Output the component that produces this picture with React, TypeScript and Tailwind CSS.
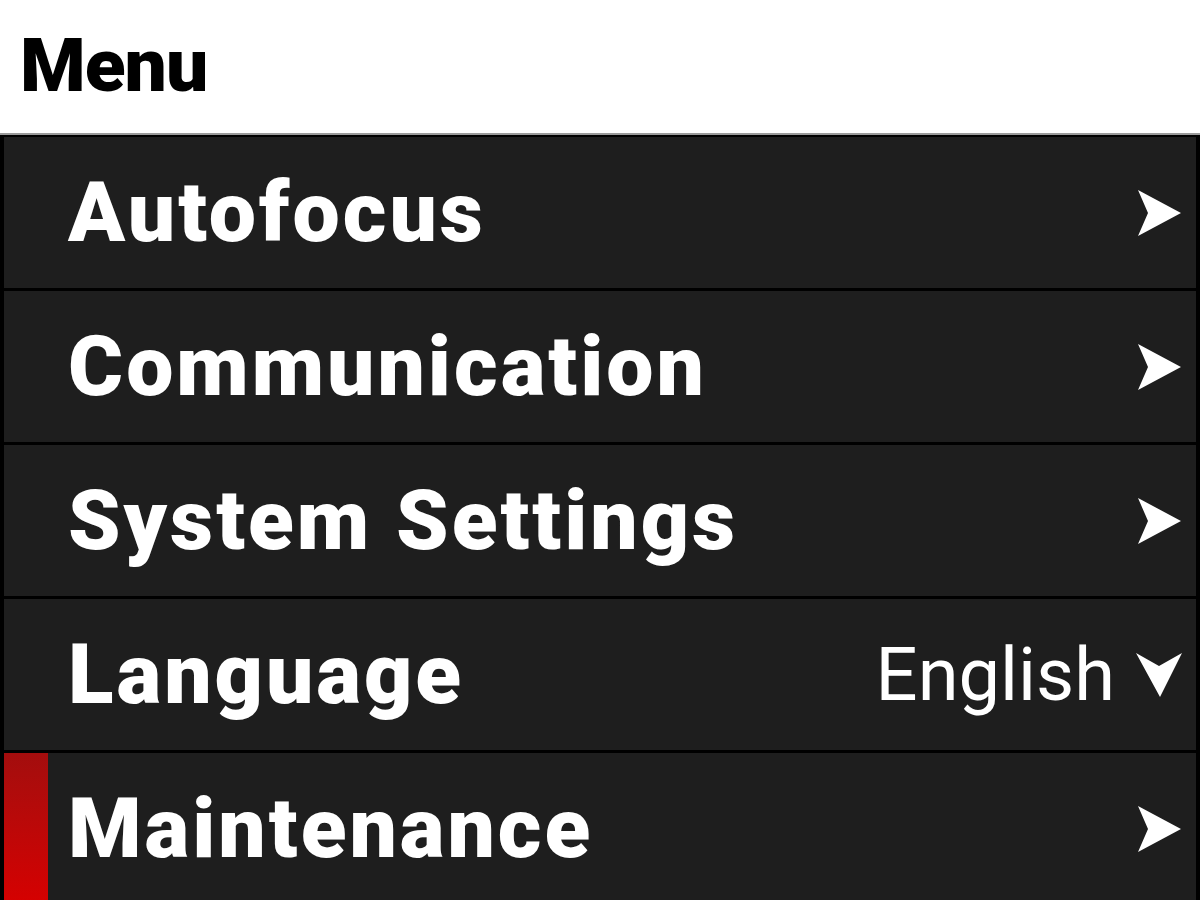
import React from "react";

const RightArrow = () => (
  <svg width="46" height="48" viewBox="0 0 46 48" className="shrink-0">
    <polygon points="1,1 44,24 1,47 11,24" fill="#ffffff" />
  </svg>
);

const DownArrow = () => (
  <svg width="48" height="46" viewBox="0 0 48 46" className="shrink-0">
    <polygon points="1,1 24,14 47,1 25,45" fill="#ffffff" />
  </svg>
);

const items = [
  { label: "Autofocus" },
  { label: "Communication" },
  { label: "System Settings" },
  { label: "Language", value: "English" },
  { label: "Maintenance", selected: true },
];

export default function App() {
  return (
    <div className="w-[1200px] h-[900px] overflow-hidden bg-white" style={{ fontFamily: "Roboto, 'Liberation Sans', sans-serif" }}>
      <div className="h-[133px] flex items-center pl-[20px] pb-[2px]">
        <span className="text-[75px] font-black text-black leading-none tracking-[-1px]">Menu</span>
      </div>
      <div className="border-t-[2px] border-t-[#9a9a9a] bg-black pl-[4px] pr-[4px] pt-[2px] flex flex-col gap-[3px]">
        {items.map((it) => (
          <div key={it.label} className="h-[151px] shrink-0 bg-[#1e1e1e] flex items-center relative">
            {it.selected && (
              <div className="absolute left-0 top-0 bottom-0 w-[44px] bg-gradient-to-b from-[#a30d0d] to-[#d60000]" />
            )}
            <span className="pl-[64px] text-white font-black text-[84px] leading-none tracking-[3px] flex-1">
              {it.label}
            </span>
            {it.value ? (
              <div className="flex items-center gap-[20px] pr-[13px]">
                <span className="text-white text-[74px] leading-none">{it.value}</span>
                <DownArrow />
              </div>
            ) : (
              <div className="pr-[13px]">
                <RightArrow />
              </div>
            )}
          </div>
        ))}
      </div>
    </div>
  );
}
